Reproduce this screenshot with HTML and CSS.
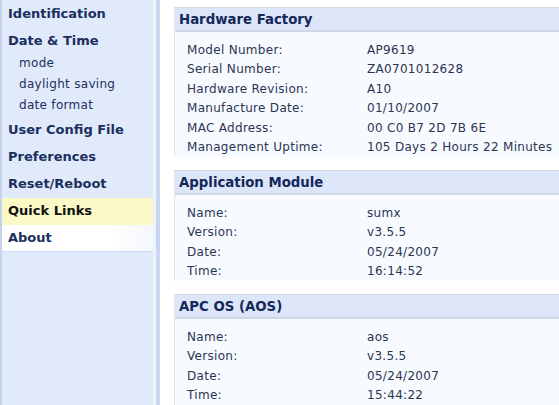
FILE: index.html
```html
<!DOCTYPE html>
<html lang="en">
<head>
  <meta charset="utf-8">
  <title>About</title>
  <link rel="stylesheet" href="styles.css">
</head>
<body>
  <div class="layout">
    <!-- left menu -->
    <nav class="sidebar">
      <a class="menu-item" href="#">Identification</a>
      <a class="menu-item parent" href="#">Date &amp; Time</a>
      <a class="sub-item" href="#">mode</a>
      <a class="sub-item" href="#">daylight saving</a>
      <a class="sub-item last" href="#">date format</a>
      <a class="menu-item" href="#">User Config File</a>
      <a class="menu-item" href="#">Preferences</a>
      <a class="menu-item" href="#">Reset/Reboot</a>
      <a class="menu-item quick" href="#">Quick Links</a>
      <a class="menu-item current" href="#">About</a>
    </nav>

    <!-- info panels -->
    <main class="content">
      <section class="panel">
        <h2 class="panel-title">Hardware Factory</h2>
        <table class="info">
          <tr><td>Model Number:</td><td>AP9619</td></tr>
          <tr><td>Serial Number:</td><td>ZA0701012628</td></tr>
          <tr><td>Hardware Revision:</td><td>A10</td></tr>
          <tr><td>Manufacture Date:</td><td>01/10/2007</td></tr>
          <tr><td>MAC Address:</td><td>00 C0 B7 2D 7B 6E</td></tr>
          <tr><td>Management Uptime:</td><td>105 Days 2 Hours 22 Minutes</td></tr>
        </table>
      </section>

      <section class="panel">
        <h2 class="panel-title">Application Module</h2>
        <table class="info">
          <tr><td>Name:</td><td>sumx</td></tr>
          <tr><td>Version:</td><td>v3.5.5</td></tr>
          <tr><td>Date:</td><td>05/24/2007</td></tr>
          <tr><td>Time:</td><td>16:14:52</td></tr>
        </table>
      </section>

      <section class="panel">
        <h2 class="panel-title">APC OS (AOS)</h2>
        <table class="info">
          <tr><td>Name:</td><td>aos</td></tr>
          <tr><td>Version:</td><td>v3.5.5</td></tr>
          <tr><td>Date:</td><td>05/24/2007</td></tr>
          <tr><td>Time:</td><td>15:44:22</td></tr>
        </table>
      </section>
    </main>
  </div>
</body>
</html>
```

FILE: styles.css
```css
* {
  margin: 0; padding: 0; box-sizing: border-box;
}
html, body {
  height: 100%;
  overflow: hidden;
}
body {
  background: #fff;
  font-family: "DejaVu Sans", Verdana, sans-serif;
  color: #2c3550;
}

.layout {
  display: flex;
  height: 100vh;
}

/* left menu */
.sidebar {
  flex: 0 0 160px;
  display: flex;
  flex-direction: column;
  padding-top: 1px;
  background: #e1eafa;
  border-left: 2px solid #c6d3ec;
  border-right: 4px solid #c9d6ef;
  box-shadow: inset -3px 0 #edf2fc;
}
.menu-item,
.sub-item {
  display: block;
  text-decoration: none;
  color: #1b2f5e;
  white-space: nowrap;
}
.menu-item {
  height: 27px;
  line-height: 26px;
  padding-left: 6px;
  font-size: 13px;
  font-weight: bold;
}
.menu-item.parent {
  height: 25px;
  line-height: 25px;
}
.sub-item {
  height: 21px;
  line-height: 21px;
  padding-left: 17px;
  font-size: 12px;
  letter-spacing: 0.3px;
}
.sub-item.last {
  margin-bottom: 1px;
}
.menu-item.quick {
  margin-right: 3px;
  background: #fbf9c6;
  color: #111;
}
.menu-item.current {
  margin-right: 3px;
  background: linear-gradient(to right, #fff 70%, #f4f7fd);
  border-bottom: 1px solid #cdd8ee;
}

/* panels */
.content {
  flex: 0 0 auto;
  width: 430px;
  padding: 7px 0 0 14px;
  display: flex;
  flex-direction: column;
  gap: 13px;
}
.panel {
  border-left: 1px solid #e2e6ee;
  background: #f7faff;
}
.panel-title {
  height: 25px;
  line-height: 23px;
  padding-left: 4px;
  font-size: 13.3px;
  font-weight: bold;
  color: #14285a;
  background: #dde6f8;
  border-top: 1px solid #d3d8e2;
  border-bottom: 2px solid #cfd6e4;
}
.info {
  border-collapse: collapse;
  margin: 8px 0 0 12px;
  font-size: 12px;
  letter-spacing: 0.3px;
  color: #2b3552;
}
.info td {
  height: 19.5px;
  padding: 0;
  white-space: nowrap;
}
.info td:first-child {
  width: 180px;
}
```
